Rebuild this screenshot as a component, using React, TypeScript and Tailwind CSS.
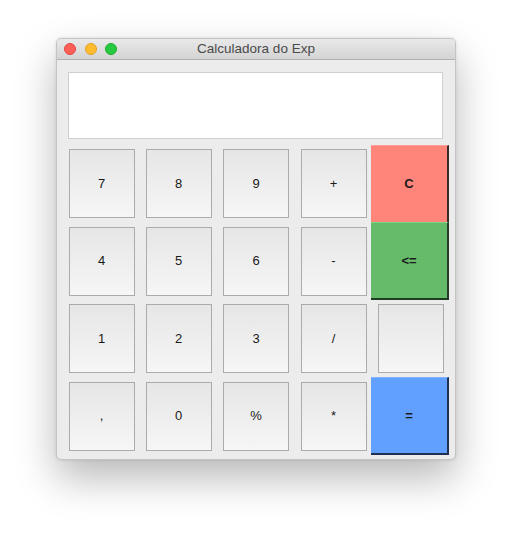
import React from "react";

const font = { fontFamily: '"Liberation Sans", Arial, sans-serif' };

function NumBtn({ label }: { label: string }) {
  return (
    <div className="flex items-center justify-center">
      <div className="w-[66px] h-[69px] flex items-center justify-center border border-[#ababab] bg-gradient-to-b from-[#e6e6e6] to-[#f6f6f6] text-[13px] text-[#1a1a1a]">
        {label}
      </div>
    </div>
  );
}

export default function App() {
  const rows = [
    ["7", "8", "9", "+"],
    ["4", "5", "6", "-"],
    ["1", "2", "3", "/"],
    [",", "0", "%", "*"],
  ];
  return (
    <div className="w-[512px] h-[534px] bg-white pt-[38px] pl-[56px]" style={font}>
      <div className="w-[400px] h-[422px] rounded-[5px] overflow-hidden border border-[#c4c4c4] bg-[#ececec] shadow-[0_18px_40px_rgba(0,0,0,0.28),0_0_3px_rgba(0,0,0,0.12)] flex flex-col">
        <div className="relative h-[21px] shrink-0 bg-gradient-to-b from-[#e9e9e9] to-[#d4d4d4] border-b border-[#b1b1b1] flex items-center justify-center">
          <div className="absolute left-[7px] top-[4px] flex gap-[8.5px]">
            <div className="w-[12px] h-[12px] rounded-full bg-[#fd5f57] border border-[#e2463f]" />
            <div className="w-[12px] h-[12px] rounded-full bg-[#febc2e] border border-[#e0a125]" />
            <div className="w-[12px] h-[12px] rounded-full bg-[#28c840] border border-[#1dad2b]" />
          </div>
          <span className="text-[13.5px] text-[#4a4a4a]">Calculadora do Exp</span>
        </div>
        <div className="pt-[12px] pl-[11px] pr-[12px]">
          <div className="h-[67px] bg-white border border-[#cfcfcf]" />
        </div>
        <div className="flex pl-[6px] pt-[6px]">
          <div className="grid grid-cols-[77px_77px_78px_77px] grid-rows-[77px_78px_77px_78px]">
            {rows.flat().map((l, i) => (
              <NumBtn key={i} label={l} />
            ))}
          </div>
          <div className="grid grid-rows-[77px_78px_77px_78px] w-[78px] -ml-[1px]">
            <div className="flex items-center justify-center bg-[#ff857a] border-t border-[#ff9e94] border-r-2 border-r-[#3a2a28] text-[13px] font-bold text-[#1a1a1a]">
              C
            </div>
            <div className="flex items-center justify-center bg-[#66bb6a] border-t border-[#7fd683] border-r-2 border-r-[#2a3a2a] border-b-2 border-b-[#1f3d20] text-[13px] font-bold text-[#1a1a1a]">
              &lt;=
            </div>
            <div className="flex items-center justify-center pl-[2px]">
              <div className="w-[66px] h-[69px] border border-[#ababab] bg-gradient-to-b from-[#e6e6e6] to-[#f6f6f6]" />
            </div>
            <div className="flex items-center justify-center bg-[#61a0ff] border-t border-[#7fb3ff] border-r-2 border-r-[#1f3050] border-b-2 border-b-[#1f3050] text-[13px] font-bold text-[#1a1a1a]">
              =
            </div>
          </div>
        </div>
      </div>
    </div>
  );
}
